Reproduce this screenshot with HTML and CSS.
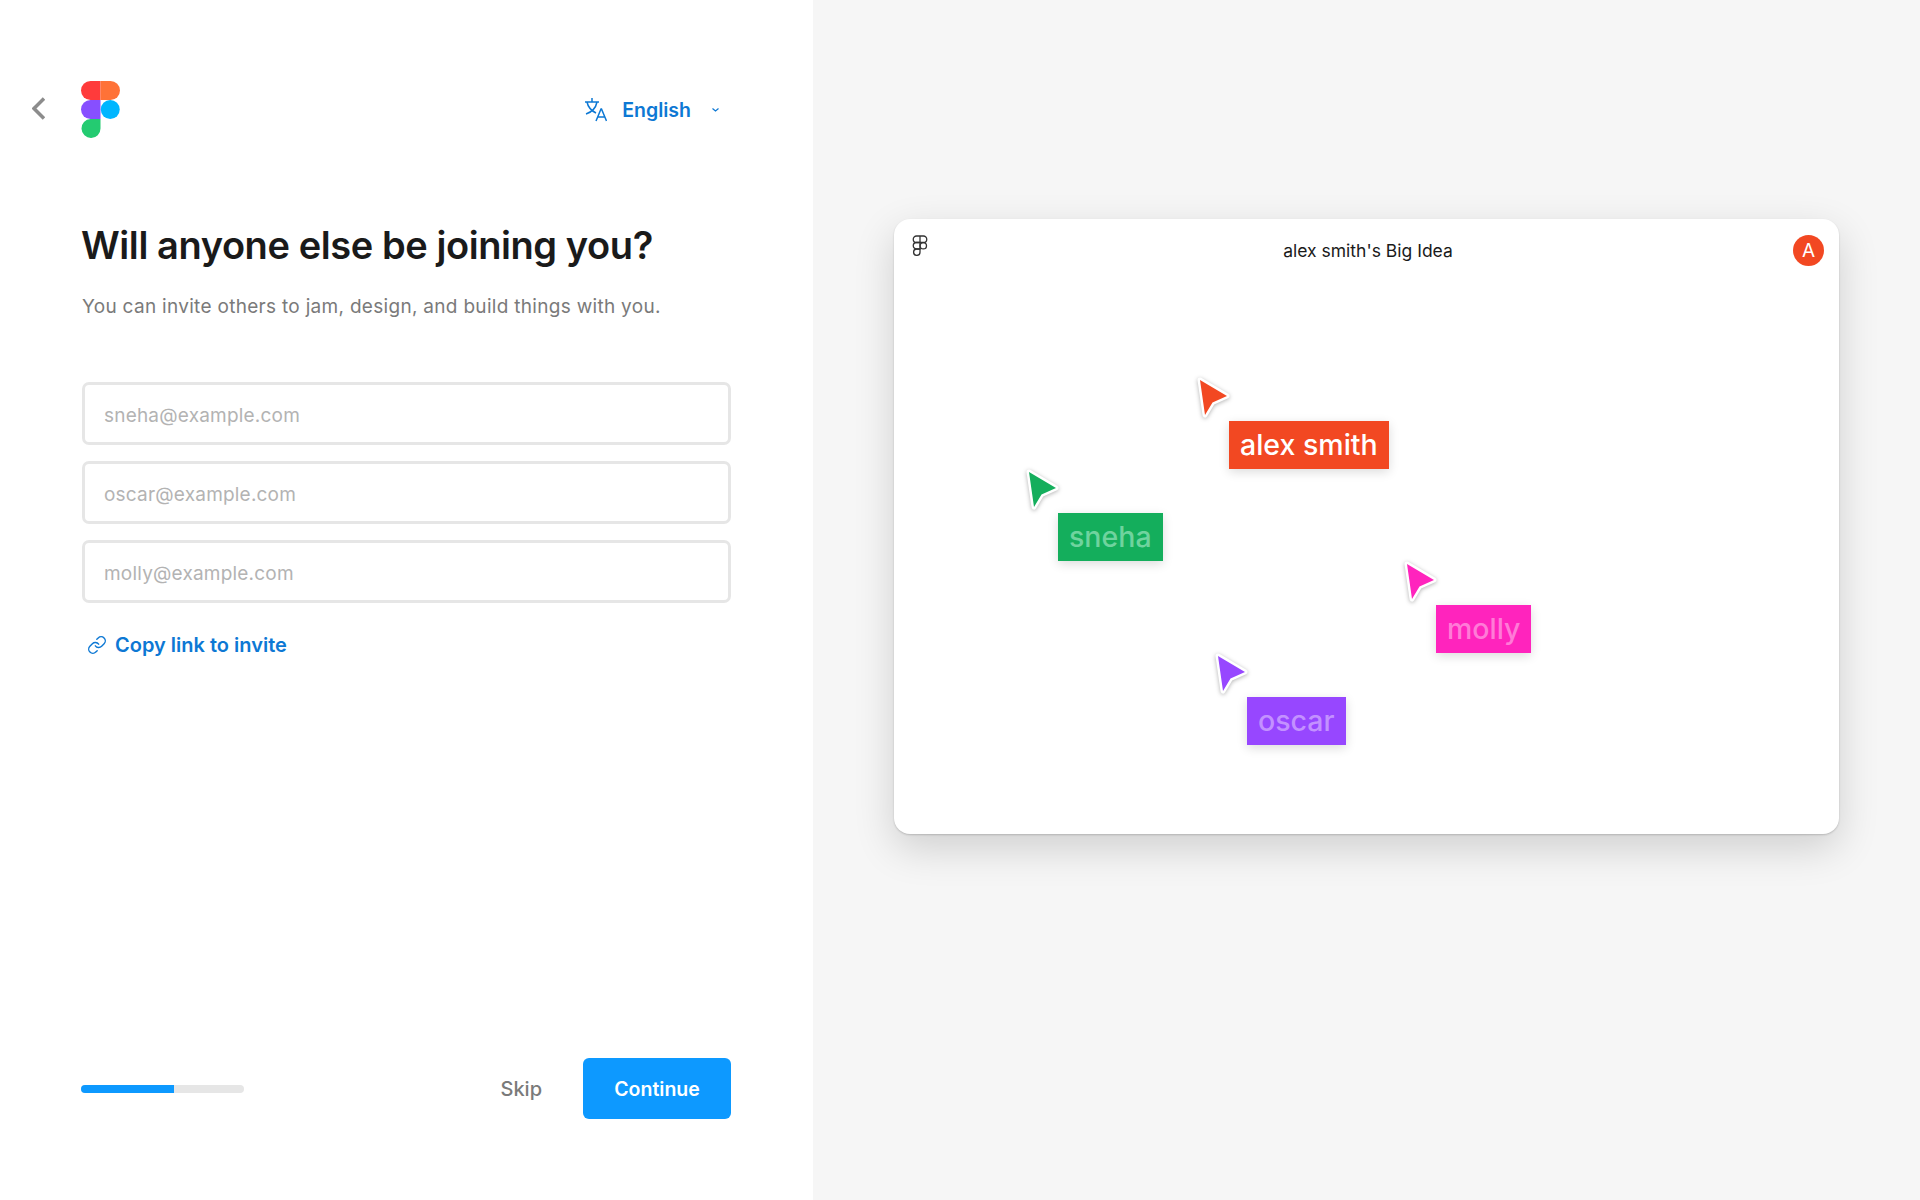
FILE: index.html
```html
<!DOCTYPE html>
<html lang="en">

<head>
    <meta charset="UTF-8">
    <title>Figma - Invite</title>
    <link rel="stylesheet" href="styles.css">
</head>

<body>
    <div class="pagina">

        <div class="panel">
            <div class="cabecera">
                <a class="atras" href="#">
                    <svg width="13" height="23" viewBox="0 0 13 23"><path d="M12 1.500 2 11.500l10 10" fill="none" stroke="#8c8c8c" stroke-width="3.500"/></svg>
                </a>
                <svg class="logo" width="39" height="57" viewBox="0 0 39 57">
                    <path d="M19.500 0H9.500a9.500 9.500 0 0 0 0 19h10z" fill="#ff3b3b"/>
                    <path d="M19.500 0h10a9.500 9.500 0 0 1 0 19h-10z" fill="#ff7237"/>
                    <path d="M19.500 19H9.500a9.500 9.500 0 0 0 0 19h10z" fill="#874fff"/>
                    <circle cx="29.250" cy="28.500" r="9.500" fill="#00b6ff"/>
                    <path d="M19.500 38H9.500a9.500 9.500 0 1 0 10 9.500z" fill="#24cb71"/>
                </svg>
                <a class="idioma" href="#">
                    <svg width="23" height="25" viewBox="0 0 23 25" fill="none" stroke="#0d78d4" stroke-width="1.500">
                        <path d="M1 5h14M8 1v4M3 5c1 5 5 9 9 11M13 5c-1 5-5 10-11 12"/>
                        <path d="M12 24l5-12h.500l5 12M14 20h7"/>
                    </svg>
                    <span>English</span>
                    <svg class="flecha" width="7" height="4" viewBox="0 0 7 4"><path d="M.500.500l3 2.500 3-2.500" fill="none" stroke="#0d78d4" stroke-width="1.200"/></svg>
                </a>
            </div>

            <div class="contenido">
                <h1>Will anyone else be joining you?</h1>
                <p class="sub">You can invite others to jam, design, and build things with you.</p>

                <form class="correos" onsubmit="return false;">
                    <input type="text" placeholder="sneha@example.com">
                    <input type="text" placeholder="oscar@example.com">
                    <input type="text" placeholder="molly@example.com">
                </form>

                <a class="copiar" href="#">
                    <svg width="20" height="20" viewBox="0 0 24 24" fill="none" stroke="#0d78d4" stroke-width="1.700" stroke-linecap="round">
                        <path d="M10 13a5 5 0 0 0 7.540.540l3-3a5 5 0 0 0-7.070-7.070l-1.720 1.710"/>
                        <path d="M14 11a5 5 0 0 0-7.540-.540l-3 3a5 5 0 0 0 7.070 7.070l1.710-1.710"/>
                    </svg>
                    Copy link to invite
                </a>
            </div>

            <div class="pie">
                <div class="progreso"><div class="barra"></div></div>
                <a class="saltar" href="#">Skip</a>
                <button class="continuar">Continue</button>
            </div>
        </div>

        <div class="vista">
            <div class="tarjeta">
                <div class="tarjeta-top">
                    <svg class="mini" width="16" height="21" viewBox="0 0 16 21" fill="none" stroke="#333" stroke-width="1.300">
                        <path d="M8 1H4.500a3 3 0 0 0 0 6.500H8zM8 1h3.500a3 3 0 0 1 0 6.500H8z"/>
                        <path d="M8 7.500H4.500a3 3 0 0 0 0 6.500H8z"/>
                        <circle cx="11.300" cy="10.750" r="3.200"/>
                        <path d="M8 14H4.500a3.200 3.200 0 1 0 3.500 3.200z"/>
                    </svg>
                    <span class="titulo">alex smith's Big Idea</span>
                    <span class="avatar">A</span>
                </div>

                <div class="persona p-alex">
                    <svg class="cursor" width="36" height="44" viewBox="0 0 36 44"><path class="c-naranja" d="M3 3 30 19 15.500 25.500 8 38z"/></svg>
                    <span class="etiqueta naranja">alex smith</span>
                </div>
                <div class="persona p-sneha">
                    <svg class="cursor" width="36" height="44" viewBox="0 0 36 44"><path class="c-verde" d="M3 3 30 19 15.500 25.500 8 38z"/></svg>
                    <span class="etiqueta verde">sneha</span>
                </div>
                <div class="persona p-molly">
                    <svg class="cursor" width="36" height="44" viewBox="0 0 36 44"><path class="c-rosa" d="M3 3 30 19 15.500 25.500 8 38z"/></svg>
                    <span class="etiqueta rosa">molly</span>
                </div>
                <div class="persona p-oscar">
                    <svg class="cursor" width="36" height="44" viewBox="0 0 36 44"><path class="c-morado" d="M3 3 30 19 15.500 25.500 8 38z"/></svg>
                    <span class="etiqueta morado">oscar</span>
                </div>
            </div>
        </div>

    </div>
</body>

</html>
```

FILE: styles.css
```css
body {
    margin: 0;
    background-color: #fff;
    font-family: Inter, "Liberation Sans", sans-serif;
}

a {
    text-decoration: none;
}

.pagina {
    display: flex;
    height: 1200px;
}

.panel {
    width: 813px;
    display: flex;
    flex-direction: column;
    box-sizing: border-box;
    background-color: #fff;
}

.cabecera {
    display: flex;
    align-items: center;
    height: 57px;
    margin-top: 81px;
    padding-left: 32px;
    padding-right: 94px;
}

.atras {
    display: flex;
    width: 49px;
    margin-top: -3px;
}

.idioma {
    display: flex;
    align-items: center;
    margin-left: auto;
    color: #0d78d4;
    font-size: 19.500px;
    font-weight: 600;
}

.idioma span {
    margin-left: 15px;
    padding-top: 1px;
}

.flecha {
    margin-left: 21px;
}

.contenido {
    padding: 84px 82px 0;
}

h1 {
    margin: 0;
    font-size: 38px;
    line-height: 46px;
    font-weight: 600;
    letter-spacing: -0.42px;
    color: #1a1a1a;
    margin-left: -1px;
}

.sub {
    margin: 26px 0 0;
    font-size: 19px;
    line-height: 26px;
    letter-spacing: 0.3px;
    color: #7a7a7a;
}

.correos {
    display: flex;
    flex-direction: column;
    gap: 16px;
    margin-top: 62px;
}

input[type="text"] {
    height: 63px;
    box-sizing: border-box;
    padding: 3px 20px 0 19px;
    border: 3px solid #e6e6e6;
    border-radius: 7px;
    outline: none;
    font-family: inherit;
    font-size: 19px;
    letter-spacing: 0.2px;
}

input::placeholder {
    color: #b3b3b3;
    opacity: 1;
}

.copiar {
    display: flex;
    align-items: center;
    gap: 8px;
    margin-top: 29px;
    padding-left: 5px;
    color: #0d78d4;
    font-size: 20px;
    line-height: 26px;
    font-weight: 600;
}

.pie {
    display: flex;
    align-items: center;
    margin-top: auto;
    padding: 0 82px 81px 81px;
}

.progreso {
    width: 163px;
    height: 8px;
    border-radius: 4px;
    background-color: #e6e6e6;
    overflow: hidden;
}

.barra {
    width: 57%;
    height: 100%;
    background-color: #0d99ff;
}

.saltar {
    margin-left: auto;
    margin-right: 41px;
    color: #7a7a7a;
    font-size: 20px;
    font-weight: 500;
}

.continuar {
    width: 148px;
    height: 61px;
    border: none;
    border-radius: 6px;
    background-color: #0d99ff;
    color: #fff;
    font-family: inherit;
    font-size: 19.500px;
    font-weight: 600;
}

.vista {
    flex: 1;
    background-color: #f6f6f6;
    padding: 219px 0 0 81px;
}

.tarjeta {
    position: relative;
    width: 945px;
    height: 615px;
    border-radius: 16px;
    background-color: #fff;
    box-shadow: 0 1px 2px rgba(0, 0, 0, 0.18), 0 14px 40px rgba(0, 0, 0, 0.16);
}

.tarjeta-top {
    display: grid;
    grid-template-columns: 1fr auto 1fr;
    align-items: center;
    padding: 16px 15px 0 18px;
}

.mini {
    justify-self: start;
    margin-top: -10px;
}

.titulo {
    font-size: 17.500px;
    color: #1a1a1a;
}

.avatar {
    justify-self: end;
    width: 31px;
    height: 31px;
    border-radius: 50%;
    background-color: #f24822;
    color: #fff;
    font-size: 19px;
    line-height: 31px;
    text-align: center;
}

/* cada persona esta en un sitio libre del lienzo */
.persona {
    position: absolute;
    display: flex;
    flex-direction: column;
    align-items: flex-start;
}

.p-alex {
    left: 303px;
    top: 158px;
}

.p-sneha {
    left: 132px;
    top: 250px;
}

.p-molly {
    left: 510px;
    top: 342px;
}

.p-oscar {
    left: 321px;
    top: 434px;
}

.cursor {
    overflow: visible;
    filter: drop-shadow(0 1px 2px rgba(0, 0, 0, 0.3));
}

.cursor path {
    stroke: #fff;
    stroke-width: 5;
    stroke-linejoin: round;
    paint-order: stroke;
}

.c-naranja {
    fill: #f24822;
}

.c-verde {
    fill: #14ae5c;
}

.c-rosa {
    fill: #ff24bd;
}

.c-morado {
    fill: #9747ff;
}

.etiqueta {
    margin-left: 32px;
    padding: 0 11px;
    height: 48px;
    font-size: 28.500px;
    font-weight: 500;
    line-height: 48px;
    box-shadow: 0 3px 10px rgba(0, 0, 0, 0.14);
}

.naranja {
    background-color: #f24822;
    color: #fff;
}

.verde {
    background-color: #14ae5c;
    color: #6fd39e;
}

.rosa {
    background-color: #ff24bd;
    color: #ff7bd7;
}

.morado {
    background-color: #9747ff;
    color: #c391ff;
}
```
